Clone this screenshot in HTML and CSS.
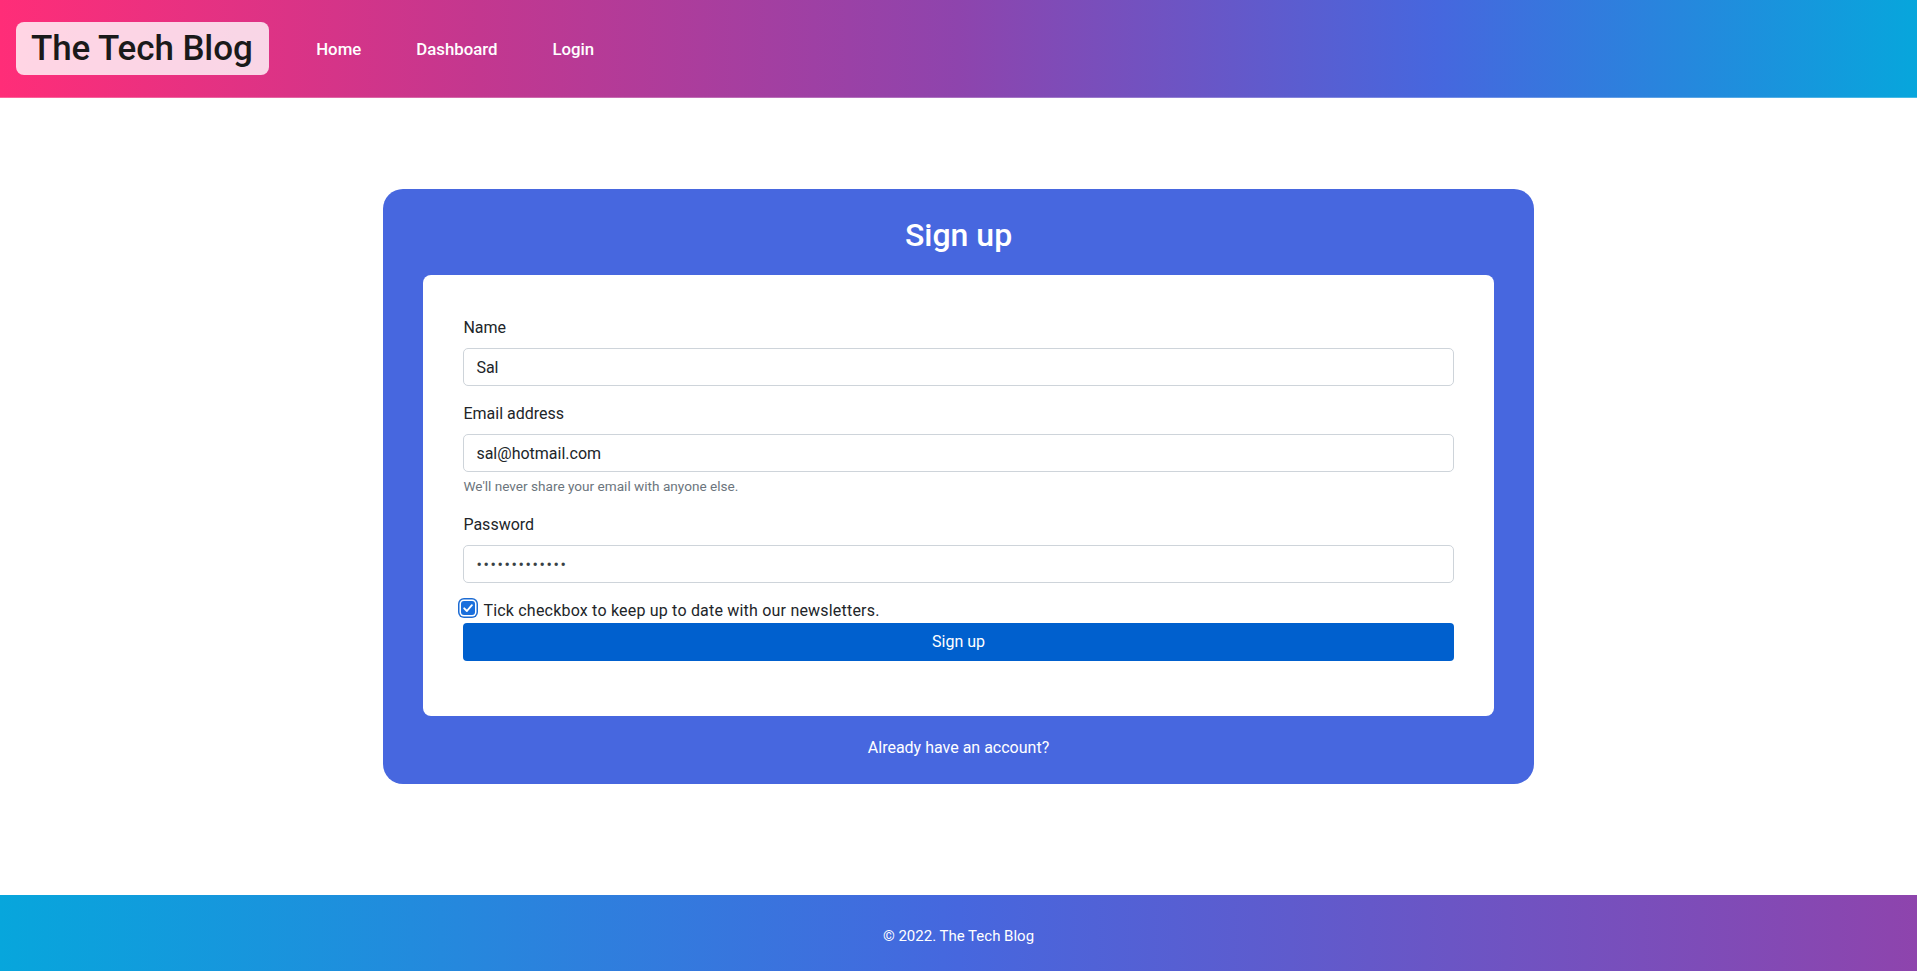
FILE: index.html
```html
<!DOCTYPE html>
<html lang="en">
<head>
<meta charset="utf-8">
<title>The Tech Blog - Sign up</title>
<link rel="stylesheet" href="styles.css">
</head>
<body>
<header class="site-header">
  <a class="brand" href="#">The Tech Blog</a>
  <nav class="nav">
    <a class="nav-link" href="#">Home</a>
    <a class="nav-link" href="#">Dashboard</a>
    <a class="nav-link" href="#">Login</a>
  </nav>
</header>

<main class="main">
  <section class="card">
    <h2 class="card-title">Sign up</h2>
    <form class="form-box">
      <div class="group">
        <label class="label" for="name">Name</label>
        <input class="input" id="name" type="text" value="Sal">
      </div>
      <div class="group">
        <label class="label" for="email">Email address</label>
        <input class="input" id="email" type="email" value="sal@hotmail.com">
        <div class="help">We'll never share your email with anyone else.</div>
      </div>
      <div class="group">
        <label class="label" for="password">Password</label>
        <input class="input input-password" id="password" type="password" value="sal1234567890">
      </div>
      <label class="check">
        <span class="check-box" role="checkbox" aria-checked="true">
          <svg viewBox="0 0 14 14" width="14" height="14"><path d="M3.2 7.3 L5.9 10 L10.9 4.2" fill="none" stroke="#fff" stroke-width="1.9" stroke-linecap="round" stroke-linejoin="round"/></svg>
        </span>
        Tick checkbox to keep up to date with our newsletters.
      </label>
      <button class="btn" type="button">Sign up</button>
    </form>
    <a class="alt-link" href="#">Already have an account?</a>
  </section>
</main>

<footer class="site-footer">
  <p class="copy">© 2022. The Tech Blog</p>
</footer>
</body>
</html>
```

FILE: styles.css
```css
* { box-sizing: border-box; }

html, body { height: 100%; }

body {
  margin: 0;
  min-height: 100vh;
  display: flex;
  flex-direction: column;
  font-family: Roboto, "Liberation Sans", Arial, sans-serif;
  font-size: 16px;
  line-height: 1.5;
  color: #212529;
  background: #fff;
}

a { text-decoration: none; }

.site-header {
  height: 98px;
  display: flex;
  align-items: center;
  padding-left: 16px;
  background: linear-gradient(to right, #ff2d78 0%, #c3378f 25%, #8e44ad 50%, #4667de 75%, #07a6dc 100%);
  border-bottom: 1px solid rgba(255, 255, 255, 0.25);
}

.brand {
  display: block;
  padding: 6px 16px 6px 15px;
  border-radius: 8px;
  background: rgba(255, 255, 255, 0.8);
  color: #1a1a1a;
  font-size: 35px;
  font-weight: 500;
  line-height: 41px;
  letter-spacing: -0.1px;
}

.nav {
  display: flex;
  margin-left: 20px;
}

.nav-link {
  padding: 0 27.5px;
  color: #fff;
  font-size: 16.8px;
  font-weight: 500;
  line-height: 24px;
}

.main {
  flex: 1;
  padding-top: 91px;
}

.card {
  width: 60%;
  margin: 0 auto;
  padding: 27px 40px 24px;
  border-radius: 20px;
  background: #4767df;
  text-align: center;
}

.card-title {
  margin: 0 0 21px;
  color: #fff;
  font-size: 32px;
  font-weight: 500;
  line-height: 38px;
}

.form-box {
  padding: 41px 40px 39px;
  border-radius: 8px;
  background: #fff;
  text-align: left;
}

.group { margin-bottom: 16px; }

.label {
  display: block;
  margin-bottom: 8px;
  font-size: 16px;
  line-height: 24px;
  color: #212529;
}

.input {
  display: block;
  width: 100%;
  height: 38px;
  padding: 6px 12px;
  border: 1px solid #ced4da;
  border-radius: 5px;
  font-family: inherit;
  font-size: 16px;
  color: #212529;
  background: #fff;
}

.input-password {
  letter-spacing: 1.6px;
  color: #3a3f44;
}

.help {
  margin-top: 4px;
  font-size: 13.6px;
  line-height: 21px;
  color: #6c757d;
}

.check {
  display: flex;
  align-items: flex-start;
  font-size: 16px;
  line-height: 24px;
  letter-spacing: 0.2px;
  color: #212529;
}

.check-box {
  flex: none;
  width: 14px;
  height: 14px;
  margin: 2px 8px 0 -2px;
  border-radius: 3px;
  background: #1a6fdc;
  box-shadow: 0 0 0 1.5px #fff, 0 0 0 3px #1c6bd3;
  display: flex;
}

.check-box svg { display: block; }

.btn {
  display: block;
  width: 100%;
  height: 38px;
  margin-bottom: 16px;
  border: 0;
  border-radius: 4px;
  background: #0060ce;
  color: #fff;
  font-family: inherit;
  font-size: 16px;
  line-height: 24px;
}

.alt-link {
  display: block;
  margin-top: 20px;
  color: #fff;
  font-size: 16px;
  line-height: 24px;
}

.site-footer {
  height: 76px;
  display: flex;
  align-items: center;
  justify-content: center;
  padding-top: 6px;
  background: linear-gradient(to right, #07a6dc 0%, #4667de 50%, #8e44ad 100%);
}

.copy {
  margin: 0;
  color: #fff;
  font-size: 15px;
  line-height: 22px;
}
```
